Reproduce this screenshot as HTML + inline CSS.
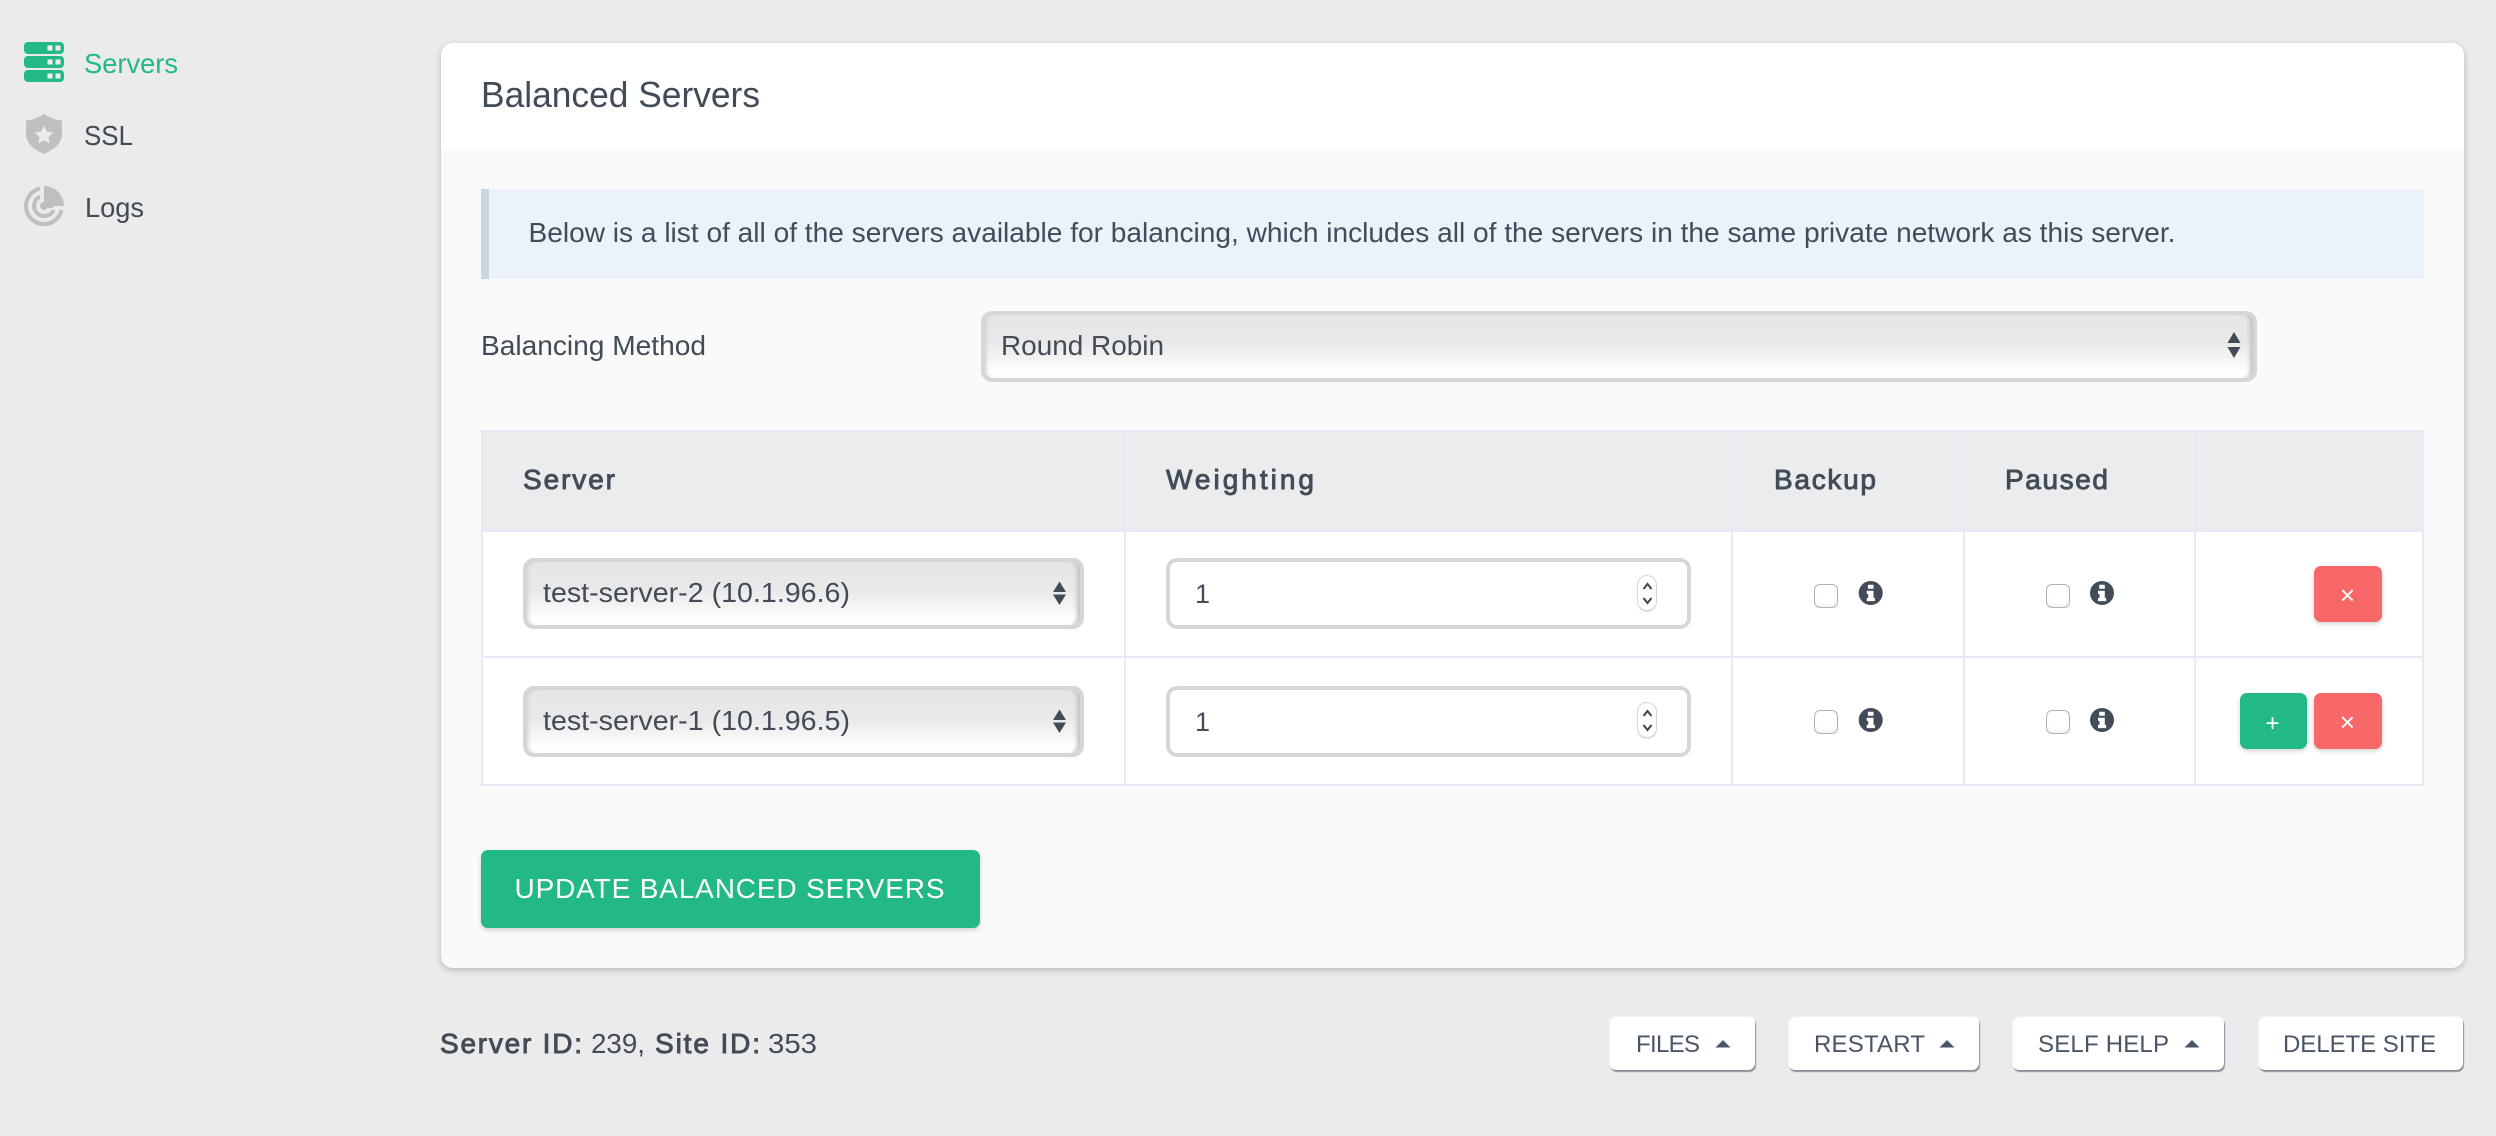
<!DOCTYPE html>
<html lang="en">
<head>
<meta charset="utf-8">
<title>Balanced Servers</title>
<style>
html,body{margin:0;padding:0;width:2496px;height:1136px;overflow:hidden;background:#ebebeb}
body{position:relative;font-family:"Liberation Sans",sans-serif;color:#414c58}
.a{position:absolute;box-sizing:border-box}
.card{left:441px;top:43px;width:2023px;height:925px;background:#fafafa;border-radius:12px;box-shadow:0 2px 7px rgba(0,0,0,.22);overflow:hidden}
.head{left:0;top:0;width:2023px;height:106px;background:#fff}
.alert{left:481px;top:189px;width:1943px;height:90px;background:#ebf2f9;border-left:8px solid #c9d6e2}
.sel{background:#d6d6d6;border-radius:11px}
.sel i{position:absolute;left:4px;right:4px;top:4px;bottom:4px;border-radius:8px;background:linear-gradient(#e6e6e6 0,#e9e9e9 45%,#f4f4f4 70%,#fff 90%);box-shadow:inset 4px 0 4px -3px #d0d0d0,inset -6px 0 4px -3px #c2c2c2,inset 0 -2px 0 #fff}
.inp{background:#fff;border:4px solid #d6d6d6;border-radius:11px}
.spin{width:20px;height:36px;background:#fff;border:1px solid #d8d8d8;border-radius:10px;box-shadow:0 1px 1px rgba(0,0,0,.12)}
.th{left:481px;top:430px;width:1943px;height:101px;background:#ebecee}
.rows{left:481px;top:531px;width:1943px;height:255px;background:#fff}
.l{background:#e8e8f6}
.cb{width:24px;height:24px;background:#fff;border:1.5px solid #b4b4b4;border-radius:6px;box-shadow:inset 0 -2px 3px rgba(0,0,0,.07)}
.btn{border-radius:7px;box-shadow:0 2px 5px rgba(0,0,0,.18)}
.g{background:#22b985}
.r{background:#f76767}
.w{background:#fff;border-radius:7px;box-shadow:1px 2px 1px #8b8f99,inset 1px 1px 1px #edf2f9}
svg{position:absolute;left:0;top:0}
</style>
</head>
<body>
<div class="a card"><div class="a head"></div></div>
<div class="a alert"></div>

<div class="a sel" style="left:981px;top:311px;width:1276px;height:71px"><i></i></div>

<div class="a th"></div>
<div class="a rows"></div>
<div class="a l" style="left:481px;top:430px;width:1943px;height:2px"></div>
<div class="a l" style="left:481px;top:530px;width:1943px;height:2px"></div>
<div class="a l" style="left:481px;top:656px;width:1943px;height:2px"></div>
<div class="a l" style="left:481px;top:784px;width:1943px;height:2px"></div>
<div class="a l" style="left:481px;top:430px;width:2px;height:356px"></div>
<div class="a l" style="left:1124px;top:430px;width:2px;height:356px"></div>
<div class="a l" style="left:1731px;top:430px;width:2px;height:356px"></div>
<div class="a l" style="left:1963px;top:430px;width:2px;height:356px"></div>
<div class="a l" style="left:2194px;top:430px;width:2px;height:356px"></div>
<div class="a l" style="left:2422px;top:430px;width:2px;height:356px"></div>

<div class="a sel" style="left:523px;top:558px;width:561px;height:71px"><i></i></div>
<div class="a sel" style="left:523px;top:686px;width:561px;height:71px"><i></i></div>
<div class="a inp" style="left:1166px;top:558px;width:525px;height:71px"></div>
<div class="a inp" style="left:1166px;top:686px;width:525px;height:71px"></div>
<div class="a spin" style="left:1637px;top:575px"></div>
<div class="a spin" style="left:1637px;top:702px"></div>

<div class="a cb" style="left:1814px;top:584px"></div>
<div class="a cb" style="left:2046px;top:584px"></div>
<div class="a cb" style="left:1814px;top:710px"></div>
<div class="a cb" style="left:2046px;top:710px"></div>

<div class="a btn r" style="left:2314px;top:566px;width:68px;height:56px"></div>
<div class="a btn g" style="left:2240px;top:693px;width:67px;height:56px"></div>
<div class="a btn r" style="left:2314px;top:693px;width:68px;height:56px"></div>
<div class="a btn g" style="left:481px;top:850px;width:499px;height:78px"></div>

<div class="a w" style="left:1609px;top:1016px;width:146px;height:54px"></div>
<div class="a w" style="left:1788px;top:1016px;width:191px;height:54px"></div>
<div class="a w" style="left:2012px;top:1016px;width:212px;height:54px"></div>
<div class="a w" style="left:2258px;top:1016px;width:205px;height:54px"></div>

<svg width="2496" height="1136" viewBox="0 0 2496 1136" xmlns="http://www.w3.org/2000/svg" font-family="'Liberation Sans',sans-serif" fill="#414c58">
  <!-- sidebar icons -->
  <g fill="#22b985">
    <rect x="24" y="42" width="40" height="12" rx="4"/>
    <rect x="24" y="56" width="40" height="12" rx="4"/>
    <rect x="24" y="70" width="40" height="12" rx="4"/>
  </g>
  <g fill="#f0f0f0">
    <rect x="47.500" y="45.500" width="5" height="5"/><rect x="55.500" y="45.500" width="5" height="5"/>
    <rect x="47.500" y="59.500" width="5" height="5"/><rect x="55.500" y="59.500" width="5" height="5"/>
    <rect x="47.500" y="73.500" width="5" height="5"/><rect x="55.500" y="73.500" width="5" height="5"/>
  </g>
  <path fill="#bfbfbf" d="M44 114 C50 118 56 120 62 120.500 V134 C62 144 53 150 44 154 C35 150 26 144 26 134 V120.500 C32 120 38 118 44 114Z"/>
  <path fill="#ebebeb" d="M44 125.500 L46.800 131.800 L53.500 132.500 L48.500 137 L49.800 143.500 L44 140.200 L38.200 143.500 L39.500 137 L34.500 132.500 L41.200 131.800Z"/>
  <path fill="#bfbfbf" d="M44 186 A20 20 0 0 1 64 206 H44Z"/>
  <g fill="none" stroke="#bfbfbf" stroke-width="4">
    <path d="M61.600 210 A18 18 0 1 1 40 188.500"/>
    <path d="M53.600 210 A10.200 10.200 0 1 1 40 196.600"/>
  </g>
  <circle cx="44" cy="206" r="4" fill="#bfbfbf"/>
  <rect x="44" y="205" width="9" height="3" fill="#bfbfbf"/>

  <!-- sidebar labels -->
  <text x="84" y="73" font-size="28" fill="#22b985" textLength="94" lengthAdjust="spacingAndGlyphs">Servers</text>
  <text x="84" y="145" font-size="28" textLength="49" lengthAdjust="spacingAndGlyphs">SSL</text>
  <text x="85" y="217" font-size="28" textLength="59" lengthAdjust="spacingAndGlyphs">Logs</text>

  <text x="481" y="107" font-size="36" textLength="279" lengthAdjust="spacingAndGlyphs">Balanced Servers</text>
  <text x="528.500" y="242" font-size="27.500" textLength="1647" lengthAdjust="spacingAndGlyphs">Below is a list of all of the servers available for balancing, which includes all of the servers in the same private network as this server.</text>

  <text x="481" y="355" font-size="28" textLength="225" lengthAdjust="spacingAndGlyphs">Balancing Method</text>
  <text x="1001" y="355" font-size="28" textLength="163" lengthAdjust="spacingAndGlyphs">Round Robin</text>
  <path d="M2234 332 L2240.500 343 H2227.500Z M2227.500 347 H2240.500 L2234 358Z"/>

  <!-- table head -->
  <g font-size="28" stroke="#414c58" stroke-width=".9">
    <text x="523" y="489" textLength="92" lengthAdjust="spacing">Server</text>
    <text x="1166" y="489" textLength="148" lengthAdjust="spacing">Weighting</text>
    <text x="1774" y="489" textLength="102" lengthAdjust="spacing">Backup</text>
    <text x="2005" y="489" textLength="103" lengthAdjust="spacing">Paused</text>
  </g>

  <!-- rows -->
  <text x="543" y="602" font-size="28" textLength="307" lengthAdjust="spacingAndGlyphs">test-server-2 (10.1.96.6)</text>
  <text x="543" y="730" font-size="28" textLength="307" lengthAdjust="spacingAndGlyphs">test-server-1 (10.1.96.5)</text>
  <path d="M1059.500 581.500 L1066 592 H1053Z M1053 594.500 H1066 L1059.500 605Z"/>
  <path d="M1059.500 709.500 L1066 720 H1053Z M1053 722.500 H1066 L1059.500 733Z"/>
  <text x="1195" y="603" font-size="27">1</text>
  <text x="1195" y="731" font-size="27">1</text>
  <g fill="none" stroke="#444" stroke-width="2">
    <path d="M1643.500 589 L1647.500 584 L1651.500 589"/>
    <path d="M1643.500 598 L1647.500 603 L1651.500 598"/>
    <path d="M1643.500 716 L1647.500 711 L1651.500 716"/>
    <path d="M1643.500 725 L1647.500 730 L1651.500 725"/>
  </g>

  <!-- info icons -->
  <defs>
    <g id="info">
      <circle r="12" fill="#414c58"/>
      <path fill="#fff" d="M-2.800 -8.300 h5.600 v4.100 h-5.600z M-4 -2.300 h6.800 v7.200 h1.400 v3.200 h-8.200 v-3.200 h1.500 v-4 h-1.500z"/>
    </g>
  </defs>
  <use href="#info" x="1870.700" y="593"/>
  <use href="#info" x="2102" y="593"/>
  <use href="#info" x="1870.700" y="720"/>
  <use href="#info" x="2102" y="720"/>

  <!-- small buttons -->
  <g fill="#fff" font-size="26" text-anchor="middle">
    <text x="2347.500" y="604">×</text>
    <text x="2347.500" y="731">×</text>
    <text x="2272.500" y="731" font-size="24">+</text>
  </g>

  <text x="514.500" y="898" font-size="28" fill="#fff" textLength="430" lengthAdjust="spacing">UPDATE BALANCED SERVERS</text>

  <!-- footer -->
  <g font-size="28">
    <text x="440" y="1053" stroke="#414c58" stroke-width=".9" textLength="142" lengthAdjust="spacing">Server ID:</text>
    <text x="591" y="1053" textLength="54" lengthAdjust="spacingAndGlyphs">239,</text>
    <text x="655" y="1053" stroke="#414c58" stroke-width=".9" textLength="105" lengthAdjust="spacing">Site ID:</text>
    <text x="768" y="1053" textLength="49" lengthAdjust="spacingAndGlyphs">353</text>
  </g>
  <g font-size="24" fill="#4a5568">
    <text x="1636" y="1052" textLength="64" lengthAdjust="spacing">FILES</text>
    <text x="1814" y="1052" textLength="111" lengthAdjust="spacing">RESTART</text>
    <text x="2038" y="1052" textLength="131" lengthAdjust="spacing">SELF HELP</text>
    <text x="2283" y="1052" textLength="153" lengthAdjust="spacing">DELETE SITE</text>
    <path d="M1723 1040 L1730.500 1047.500 H1715.500Z M1947 1040 L1954.500 1047.500 H1939.500Z M2192 1040 L2199.500 1047.500 H2184.500Z"/>
  </g>
</svg>
</body>
</html>
